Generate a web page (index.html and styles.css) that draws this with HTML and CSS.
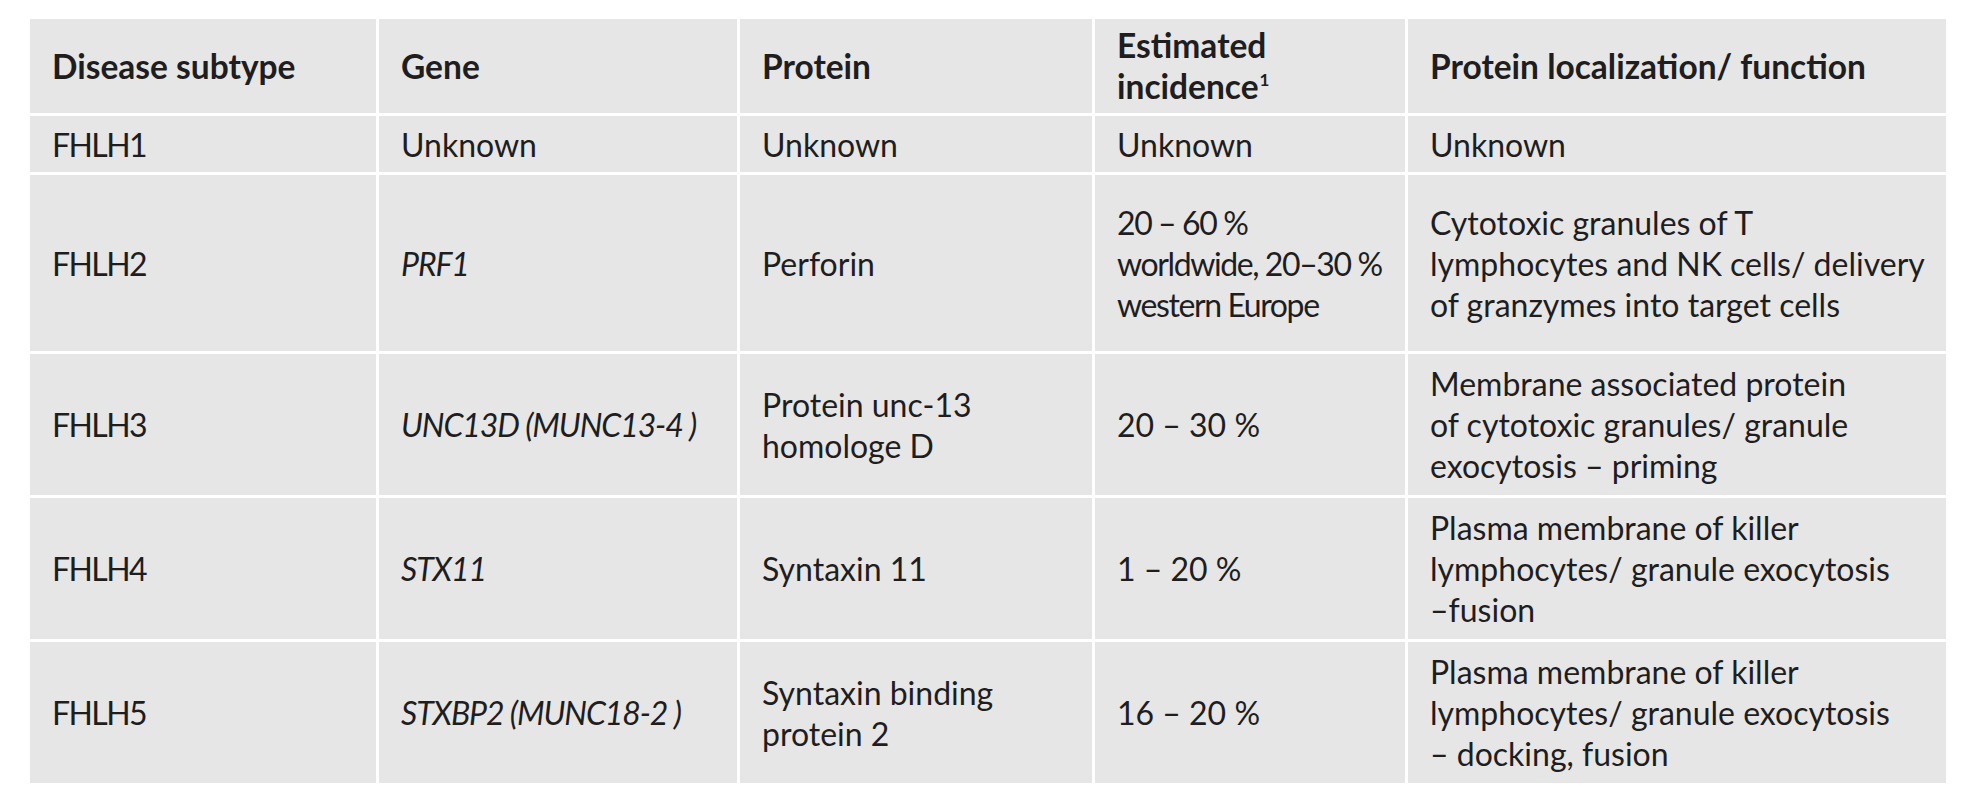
FILE: index.html
```html
<!DOCTYPE html>
<html lang="en">
<head>
<meta charset="utf-8">
<title>FHLH subtypes</title>
<link rel="stylesheet" href="styles.css">
</head>
<body>
<div class="page">
  <div class="table">
    <div class="cell head"><span class="txt">Disease subtype</span></div>
    <div class="cell head"><span class="txt">Gene</span></div>
    <div class="cell head"><span class="txt">Protein</span></div>
    <div class="cell head"><span class="txt">Estimated<br>incidence<sup class="note">1</sup></span></div>
    <div class="cell head"><span class="txt">Protein localization/ function</span></div>

    <div class="cell subtype"><span class="txt">FHLH1</span></div>
    <div class="cell"><span class="txt">Unknown</span></div>
    <div class="cell"><span class="txt">Unknown</span></div>
    <div class="cell"><span class="txt">Unknown</span></div>
    <div class="cell"><span class="txt">Unknown</span></div>

    <div class="cell subtype"><span class="txt">FHLH2</span></div>
    <div class="cell gene"><span class="txt">PRF1</span></div>
    <div class="cell"><span class="txt">Perforin</span></div>
    <div class="cell tight"><span class="txt">20 – 60 %<br>worldwide, 20–30 %<br>western Europe</span></div>
    <div class="cell"><span class="txt">Cytotoxic granules of T<br>lymphocytes and NK cells/ delivery<br>of granzymes into target cells</span></div>

    <div class="cell subtype"><span class="txt">FHLH3</span></div>
    <div class="cell gene"><span class="txt">UNC13D (MUNC13-4 )</span></div>
    <div class="cell"><span class="txt">Protein unc-13<br>homologe D</span></div>
    <div class="cell"><span class="txt">20 – 30 %</span></div>
    <div class="cell"><span class="txt">Membrane associated protein<br>of cytotoxic granules/ granule<br>exocytosis – priming</span></div>

    <div class="cell subtype"><span class="txt">FHLH4</span></div>
    <div class="cell gene"><span class="txt">STX11</span></div>
    <div class="cell"><span class="txt">Syntaxin 11</span></div>
    <div class="cell"><span class="txt">1 – 20 %</span></div>
    <div class="cell"><span class="txt">Plasma membrane of killer<br>lymphocytes/ granule exocytosis<br>–fusion</span></div>

    <div class="cell subtype"><span class="txt">FHLH5</span></div>
    <div class="cell gene"><span class="txt">STXBP2 (MUNC18-2 )</span></div>
    <div class="cell"><span class="txt">Syntaxin binding<br>protein 2</span></div>
    <div class="cell"><span class="txt">16 – 20 %</span></div>
    <div class="cell"><span class="txt">Plasma membrane of killer<br>lymphocytes/ granule exocytosis<br>– docking, fusion</span></div>
  </div>
</div>
</body>
</html>
```

FILE: styles.css
```css
html, body {
  margin: 0;
  padding: 0;
  background: #ffffff;
}

.page {
  padding: 19px 0 0 30px;
}

.table {
  display: grid;
  grid-template-columns: 346px 358px 352px 310px 538px;
  grid-template-rows: 94px 56px 176px 141px 141px 141px;
  gap: 3px;
  width: 1916px;
  background: #ffffff;
  font-family: "Lato", "Open Sans", sans-serif;
  font-size: 32px;
  line-height: 41px;
  color: #1f1d1e;
}

.cell {
  background: #e6e6e6;
  display: flex;
  align-items: center;
  padding: 0 22px;
  white-space: nowrap;
}

.txt {
  display: block;
}

.head {
  font-weight: 700;
  font-size: 33.5px;
  line-height: 41px;
}

.subtype {
  letter-spacing: -1.6px;
}

.gene {
  font-style: italic;
  letter-spacing: -1.1px;
}

.tight {
  letter-spacing: -1.4px;
}

.note {
  font-size: 17px;
  line-height: 0;
  vertical-align: 13px;
  margin-left: 1px;
}
```
